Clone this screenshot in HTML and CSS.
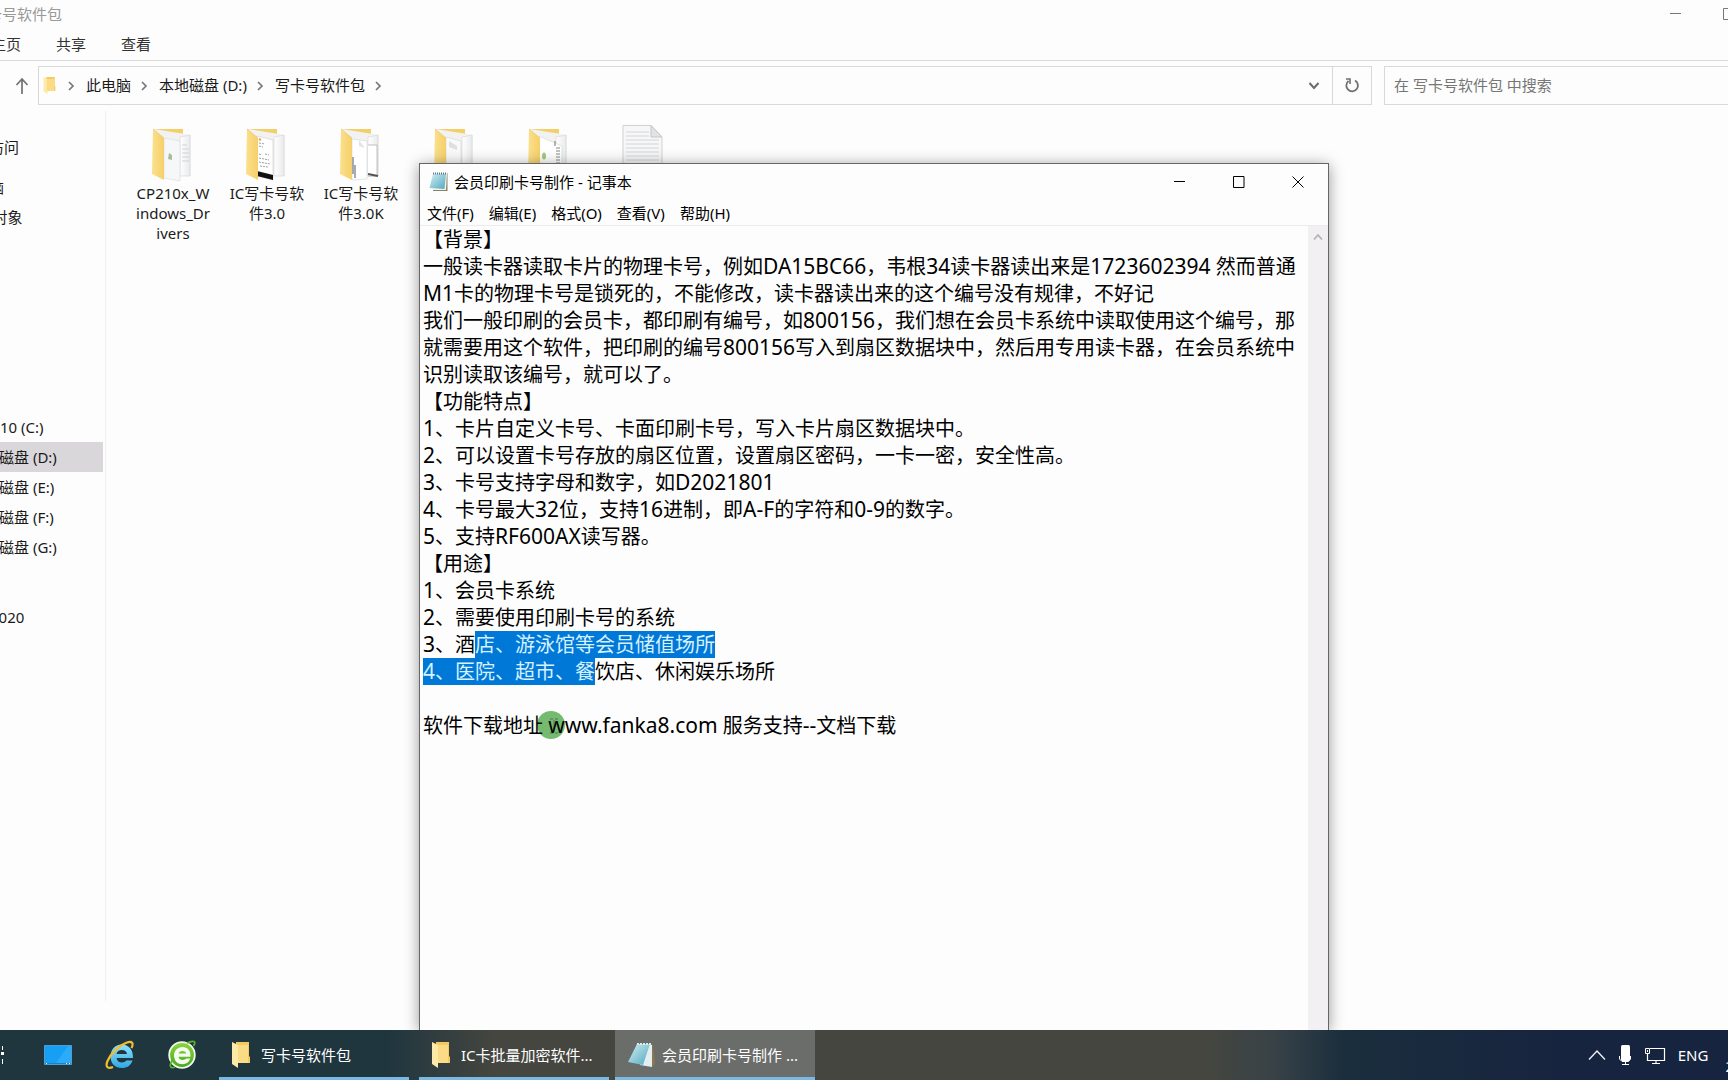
FILE: index.html
```html
<!DOCTYPE html>
<html lang="zh-CN">
<head>
<meta charset="utf-8">
<title>写卡号软件包</title>
<link rel="stylesheet" href="styles.css">
</head>
<body>
<svg class="defs" aria-hidden="true">
  <defs>
    <linearGradient id="gold" x1="0" x2="1"><stop offset="0" stop-color="#fbe08c"/><stop offset="1" stop-color="#f6d06a"/></linearGradient>
    <linearGradient id="paper" x1="0" x2="1"><stop offset="0" stop-color="#ffffff"/><stop offset="1" stop-color="#e9eaec"/></linearGradient>
    <linearGradient id="pad" x1="0" y1="0" x2="1" y2="1"><stop offset="0" stop-color="#d3eef4"/><stop offset="1" stop-color="#4fa9bd"/></linearGradient>
    <linearGradient id="ie" x1="0" y1="0" x2="0" y2="1"><stop offset="0" stop-color="#8fe0fb"/><stop offset="1" stop-color="#2fa9e4"/></linearGradient>
    <linearGradient id="green" x1="0" y1="0" x2="0" y2="1"><stop offset="0" stop-color="#8ed63f"/><stop offset="1" stop-color="#46a81d"/></linearGradient>
    <symbol id="folder" viewBox="0 0 18 26"><path d="M4 0H17V14L18 15V21H4Z" fill="#f3cb62"/><path d="M0 0L6 3V26L0 22Z" fill="#fde9a8"/><path d="M6 3H16V21H6Z" fill="#fbdc84"/></symbol>
    <symbol id="folder-back" viewBox="0 0 42 54"><path d="M1 1H31V20H1Z" fill="#f3cf67"/><path d="M2 1L39 7V48H14Z" fill="#f2f2f3"/><path d="M28 9L38 7V48H28Z" fill="url(#paper)" stroke="#d4d5d7" stroke-width=".6"/></symbol>
    <symbol id="folder-front" viewBox="0 0 42 54"><path d="M1 1L12 10V52L0 46Z" fill="url(#gold)"/><path d="M1 1L12 10" stroke="#e8c45e" stroke-width=".6"/></symbol>
    <symbol id="chevron" viewBox="0 0 8 12"><path d="M1 2L5 6L1 10" fill="none" stroke="#777" stroke-width="1.7"/></symbol>
  </defs>
</svg>

<main class="desktop">
  <section class="explorer" aria-label="写卡号软件包">
    <header class="titlebar">
      <span class="caption">写卡号软件包</span>
      <button class="win-btn" aria-label="最小化"><svg width="12" height="12" viewBox="0 0 12 12"><path d="M0 5.500H11" stroke="#777"/></svg></button>
      <button class="win-btn" aria-label="最大化"><svg width="12" height="12" viewBox="0 0 12 12"><path d="M.5 .5H10.500V11.500H.5Z" fill="none" stroke="#777"/></svg></button>
    </header>
    <nav class="tabs">
      <button>主页</button><button>共享</button><button>查看</button>
    </nav>
    <div class="addressbar">
      <button class="up" aria-label="上移"><svg width="14" height="18" viewBox="0 0 14 18"><path d="M7 17V2M1.500 8L7 2L12.500 8" fill="none" stroke="#727272" stroke-width="1.700"/></svg></button>
      <div class="path">
        <svg class="path-icon" width="13" height="17"><use href="#folder"/></svg>
        <svg width="8" height="12"><use href="#chevron"/></svg>
        <a href="#pc">此电脑</a>
        <svg width="8" height="12"><use href="#chevron"/></svg>
        <a href="#d">本地磁盘 (D:)</a>
        <svg width="8" height="12"><use href="#chevron"/></svg>
        <a href="#here">写卡号软件包</a>
        <svg width="8" height="12"><use href="#chevron"/></svg>
        <button class="drop" aria-label="展开"><svg width="12" height="10" viewBox="0 0 12 10"><path d="M1.500 2L6 7L10.500 2" fill="none" stroke="#6a6a6a" stroke-width="2"/></svg></button>
        <button class="refresh" aria-label="刷新"><svg width="16" height="18" viewBox="0 0 16 18"><path d="M11 3.500A5.800 5.800 0 1 1 4.500 4" fill="none" stroke="#6f6f6f" stroke-width="1.800"/><path d="M2 2H6V7" fill="none" stroke="#6f6f6f" stroke-width="1.600"/></svg></button>
      </div>
      <input class="search" type="search" aria-label="搜索" placeholder="在 写卡号软件包 中搜索">
    </div>
    <div class="body">
      <nav class="tree">
        <a class="root" href="#quick">快速访问</a>
        <a class="root" href="#pc">此电脑</a>
        <a href="#3d">3D 对象</a>
        <div class="drives">
          <a href="#c">Win 10 (C:)</a>
          <a class="current" href="#d">本地磁盘 (D:)</a>
          <a href="#e">本地磁盘 (E:)</a>
          <a href="#f">本地磁盘 (F:)</a>
          <a href="#g">本地磁盘 (G:)</a>
        </div>
        <a class="share" href="#2020">2020</a>
      </nav>
      <div class="files">
        <a class="file" href="#1">
          <svg width="42" height="54" viewBox="0 0 42 54"><use href="#folder-back"/><path d="M12 10L28 13V53L12 50Z" fill="#f6f7f8" stroke="#d9dadc" stroke-width=".6"/><path d="M17 25L20 27V32L16 31Z" fill="#a9bd9a"/><path d="M30 17H35M30 21H37M30 25H37M30 29H37M30 33H37" stroke="#d0d2d4"/><use href="#folder-front"/></svg>
          <span>CP210x_W<wbr>indows_Dr<wbr>ivers</span>
        </a>
        <a class="file" href="#2">
          <svg width="42" height="54" viewBox="0 0 42 54"><use href="#folder-back"/><path d="M11 8L27 12V52L11 48Z" fill="#fff" stroke="#ccc" stroke-width=".6"/><path d="M13 15L19 16M13 18L17 19M13 26L16 27M19 26L23 27M13 30L23 32M13 34L24 36M14 38L22 39" stroke="#9aa0a8" stroke-dasharray="2 1"/><path d="M11 43L27 47V52L11 48Z" fill="#111"/><path d="M13 11L15 12" stroke="#e3a63c" stroke-width="2"/><use href="#folder-front"/></svg>
          <span>IC写卡号软件3.0</span>
        </a>
        <a class="file" href="#3">
          <svg width="42" height="54" viewBox="0 0 42 54"><use href="#folder-back"/><path d="M28 17H37V48H28" fill="#fff" stroke="#aaa" stroke-width=".7"/><path d="M28 46L38 48" stroke="#555" stroke-width="2"/><path d="M12 11L27 13V51L12 52Z" fill="#fff" stroke="#d2d3d5" stroke-width=".6"/><path d="M19 12L25 20L19 18Z" fill="#e3e4e6"/><path d="M13 29V46M15 37V50" stroke="#8b9097" stroke-width="1.500"/><use href="#folder-front"/></svg>
          <span>IC写卡号软件3.0K</span>
        </a>
        <a class="file" href="#4" aria-label="文件夹">
          <svg width="42" height="54" viewBox="0 0 42 54"><use href="#folder-back"/><path d="M12 9L27 13V52L12 50Z" fill="#fafafa" stroke="#d2d3d5" stroke-width=".6"/><path d="M15 13L23 18V22L15 19Z" fill="#dedfe1"/><use href="#folder-front"/></svg>
        </a>
        <a class="file" href="#5" aria-label="文件夹">
          <svg width="42" height="54" viewBox="0 0 42 54"><use href="#folder-back"/><path d="M11 8L34 18V52L12 50Z" fill="#fff" stroke="#d2d3d5" stroke-width=".6"/><ellipse cx="16" cy="28" rx="2" ry="3.500" fill="#a5c97f"/><path d="M27 13V18M28 20H32M28 23H32M28 26H32M28 29H32M28 32H32M28 35H32" stroke="#888" stroke-width="1.200"/><use href="#folder-front"/></svg>
        </a>
        <a class="file doc" href="#6" aria-label="文本文档">
          <svg width="42" height="56" viewBox="0 0 42 56"><path d="M1 .5H29L40 12V55H1Z" fill="#f7f7f8" stroke="#d0d1d3"/><path d="M29 .5V12H40Z" fill="#e2e3e5" stroke="#c4c5c8"/><path d="M4 7H27M4 11H27M4 15H37M4 19H37M4 23H37M4 27H37M4 31H37M4 35H37M4 39H37" stroke="#d2d5d9"/></svg>
        </a>
      </div>
    </div>
  </section>

  <section class="notepad" aria-label="记事本">
    <header class="np-title">
      <svg width="20" height="20" viewBox="0 0 20 20"><path d="M5 1H18.500V19H4Z" fill="#8a8063"/><path d="M5 1H18L17 18H3Z" fill="#f4f4ef"/><path d="M4 2H17L15.500 17L.5 16Z" fill="url(#pad)"/><path d="M4 1.500H18" stroke="#5e7880" stroke-width="2" stroke-dasharray="1 1"/></svg>
      <span class="caption">会员印刷卡号制作 - 记事本</span>
      <button aria-label="最小化"><svg width="12" height="12" viewBox="0 0 12 12"><path d="M0 5.500H11" stroke="#000"/></svg></button>
      <button aria-label="最大化"><svg width="12" height="12" viewBox="0 0 12 12"><path d="M.5 .5H11V11.500H.5Z" fill="none" stroke="#000"/></svg></button>
      <button aria-label="关闭"><svg width="12" height="12" viewBox="0 0 12 12"><path d="M.5 .5L11.500 11.500M11.500 .5L.5 11.500" stroke="#000"/></svg></button>
    </header>
    <nav class="np-menu">
      <button>文件(F)</button><button>编辑(E)</button><button>格式(O)</button><button>查看(V)</button><button>帮助(H)</button>
    </nav>
    <div class="np-body">
      <div class="text" role="textbox" aria-multiline="true" aria-label="文本" contenteditable="true" spellcheck="false">
        <p>【背景】</p>
        <p>一般读卡器读取卡片的物理卡号，例如<i>DA15BC66</i>，韦根<i>34</i>读卡器读出来是<i>1723602394</i> 然而普通<i>M1</i>卡的物理卡号是锁死的，不能修改，读卡器读出来的这个编号没有规律，不好记</p>
        <p>我们一般印刷的会员卡，都印刷有编号，如<i>800156</i>，我们想在会员卡系统中读取使用这个编号，那就需要用这个软件，把印刷的编号<i>800156</i>写入到扇区数据块中，然后用专用读卡器，在会员系统中识别读取该编号，就可以了。</p>
        <p>【功能特点】</p>
        <p><i>1</i>、卡片自定义卡号、卡面印刷卡号，写入卡片扇区数据块中。</p>
        <p><i>2</i>、可以设置卡号存放的扇区位置，设置扇区密码，一卡一密，安全性高。</p>
        <p><i>3</i>、卡号支持字母和数字，如<i>D2021801</i></p>
        <p><i>4</i>、卡号最大<i>32</i>位，支持<i>16</i>进制，即<i>A-F</i>的字符和<i>0-9</i>的数字。</p>
        <p><i>5</i>、支持<i>RF600AX</i>读写器。</p>
        <p>【用途】</p>
        <p><i>1</i>、会员卡系统</p>
        <p><i>2</i>、需要使用印刷卡号的系统</p>
        <p><i>3</i>、酒<mark>店、游泳馆等会员储值场所</mark></p>
        <p><mark><i>4</i>、医院、超市、餐</mark>饮店、休闲娱乐场所</p>
        <p><br></p>
        <p>软件下载地址<span class="pointer"><svg width="28" height="28" viewBox="0 0 28 28"><circle cx="14" cy="14" r="14" fill="#74bb70"/><path d="M13 8H16M18 8H21M17 9V21M13 22H16M18 22H21" stroke="#55705a" fill="none"/></svg></span> <i>www.fanka8.com</i> 服务支持<i>--</i>文档下载</p>
      </div>
      <div class="scroll"><svg width="10" height="8" viewBox="0 0 10 8"><path d="M1 6.500L5 2L9 6.500" fill="none" stroke="#b5b3b6" stroke-width="1.800"/></svg></div>
    </div>
  </section>
</main>

<footer class="taskbar">
  <button class="pin" aria-label="任务视图"><svg width="28" height="20" viewBox="0 0 28 20"><path d="M22.500 1V5M22.500 14V19" stroke="#fff" fill="none"/><path d="M21 7H24V10H21Z" fill="#fff"/></svg></button>
  <button class="pin" aria-label="桌面"><svg width="28" height="20" viewBox="0 0 28 20"><path d="M.5 .5H27.500V19.500H.5Z" fill="#16a0f5" stroke="#4c9fd0"/><path d="M12 18L24 1H27V18Z" fill="#2cabf8"/><path d="M1 18.500H27" stroke="#1f80be"/><path d="M2 18.500H3M22 18.500H23M25 18.500H26" stroke="#fff"/></svg></button>
  <button class="pin" aria-label="Internet Explorer"><svg width="30" height="30" viewBox="0 0 30 30"><path d="M28 18H11.500C12 21 14 22.500 17 22.500C19 22.500 20.500 21.800 21.300 20.500H27.500C26 25.500 22 28 17 28C10 28 5.500 23.500 5.500 16.500C5.500 9.500 10 4.500 16.500 4.500C24 4.500 28.300 10 28 18ZM22 14C21.600 11.300 19.700 10 16.800 10C14 10 12.100 11.300 11.500 14Z" fill="url(#ie)"/><path d="M26.500 8C29 3 27 .8 22 2.500C15 4.800 6 13 2.500 21C.3 26.300 2 29.500 8 27" fill="none" stroke="#f3bd2c" stroke-width="2.200"/></svg></button>
  <button class="pin" aria-label="浏览器"><svg width="30" height="30" viewBox="0 0 30 30"><circle cx="15" cy="15" r="12.800" fill="url(#green)" stroke="#f2faec" stroke-width="1.800"/><path d="M23.500 16.800H11.500C12 19 13.500 20 15.800 20C17.300 20 18.500 19.500 19.300 18.600H23.200C22 22.500 19.300 24.200 15.700 24.200C10.600 24.200 7 21 7 15.700C7 10.600 10.500 7 15.500 7C20.800 7 24 10.800 23.500 16.800ZM19.300 13.500C18.900 11.800 17.600 10.900 15.500 10.900C13.400 10.900 12 11.800 11.500 13.500Z" fill="#f4fbef"/><path d="M20 3C26 0 30 1 26.500 6M7 18C2 24 2 29.500 8 27" fill="none" stroke="#57b52c" stroke-width="1.800"/></svg></button>
  <button class="task"><svg width="18" height="26"><use href="#folder"/></svg><span>写卡号软件包</span></button>
  <button class="task"><svg width="18" height="26"><use href="#folder"/></svg><span>IC卡批量加密软件...</span></button>
  <button class="task active"><svg width="28" height="26" viewBox="0 0 28 26"><path d="M22 2L25 3L27 22L24 25Z" fill="#8b7650"/><path d="M20 2L24 3V25L12 23Z" fill="#e4eef0"/><path d="M9 2H22L15 23L0 20Z" fill="url(#pad)"/><path d="M9 2H24" stroke="#d9ebee" stroke-width="2" stroke-dasharray="2 1"/></svg><span>会员印刷卡号制作 ...</span></button>
  <div class="tray">
    <button aria-label="显示隐藏的图标"><svg width="18" height="12" viewBox="0 0 18 12"><path d="M1 10.500L9 2L17 10.500" fill="none" stroke="#eef2f5" stroke-width="1.400"/></svg></button>
    <button aria-label="麦克风"><svg width="14" height="20" viewBox="0 0 14 20"><rect x="3" y="0" width="9" height="16" rx="1.500" fill="#fff"/><path d="M1.500 11V14L4 16.500H10.500L12.500 14V11M7.500 17V19.500M4 19.500H11" fill="none" stroke="#fff"/></svg></button>
    <button aria-label="网络"><svg width="22" height="18" viewBox="0 0 22 18"><path d="M6 2.500H20.500V14.500H3.500V8M12 15V17.500M8 17.500H16" fill="none" stroke="#fff" stroke-width="1.200"/><path d="M1.500 2.500H5.500V7.500H1.500ZM3.500 4V6" fill="none" stroke="#fff"/></svg></button>
    <button>ENG</button>
    <time class="clock">2</time>
  </div>
</footer>
</body>
</html>
```
FILE: styles.css
```css
* { box-sizing: border-box; }
body {
  margin: 0;
  height: 100vh;
  display: flex;
  flex-direction: column;
  overflow: hidden;
  background: #fdfdfd;
  color: #1a1a1a;
  font: 15px/20px "Noto Sans", "Noto Sans CJK SC", sans-serif;
  text-spacing-trim: space-all;
}
button { font: inherit; color: inherit; background: none; border: 0; padding: 0; display: flex; align-items: center; justify-content: center; white-space: nowrap; }
a { color: inherit; text-decoration: none; }
svg { display: block; flex: none; }
.defs { position: absolute; width: 0; height: 0; }

.desktop { flex: 1; min-height: 0; display: flex; position: relative; overflow: hidden; }

/* Explorer window: hangs over both sides of the screen */
.explorer { flex: 1; min-width: 0; display: flex; flex-direction: column; margin: 0 -56px 0 -48px; }
.titlebar { display: flex; height: 28px; padding: 0 29px 0 20px; align-items: center; color: #999; }
.titlebar .caption { flex: 1; }
.win-btn { width: 53px; height: 28px; }
.tabs { display: flex; gap: 35px; height: 33px; padding: 0 0 0 39px; border-bottom: 1px solid #d9d9d9; color: #333; }
.addressbar { display: flex; height: 50px; padding: 5px 0 6px 62px; align-items: stretch; }
.up { width: 16px; margin-right: 8px; }
.path { flex: 1; display: flex; align-items: center; gap: 10px; border: 1px solid #d9d9d9; padding-left: 4px; }
.path a { padding-bottom: 2px; }
.path-icon { margin-right: 2px; }
.drop { margin-left: auto; width: 20px; }
.refresh { width: 39px; align-self: stretch; border-left: 1px solid #d9d9d9; margin-left: -2px; }
.search { width: 400px; margin-left: 12px; padding: 0 9px 2px; border: 1px solid #d9d9d9; border-radius: 0; background: none; font: inherit; appearance: none; }
.search::placeholder { color: #767676; opacity: 1; }

.body { flex: 1; display: flex; min-height: 0; padding-bottom: 29px; }
.tree { width: 154px; border-right: 1px solid #f0f0f1; padding-top: 21px; display: flex; flex-direction: column; }
.tree a { display: block; height: 30px; line-height: 30px; padding-left: 17px; margin-right: 2px; white-space: nowrap; }
.tree .root { padding-left: 7px; }
.tree .root + .root { margin-top: 10px; }
.drives { padding-top: 180px; }
.tree .current { background: #d9d7d9; }
.tree .share { margin-top: 40px; padding-left: 38px; }
.files { display: grid; grid-template-columns: repeat(6, 94px); align-content: start; padding: 17px 0 0 20px; }
.file { display: flex; flex-direction: column; align-items: center; padding: 0 8px; gap: 1px; text-align: center; }
.doc { margin-top: -3px; }

/* Notepad window */
.notepad { position: absolute; left: 419px; right: 399px; top: 163px; bottom: 0; display: flex; flex-direction: column; background: #fdfdfd; border: 1px solid #666; border-bottom: 0; box-shadow: 0 2px 14px rgba(0, 0, 0, .4); color: #000; }
.np-title { display: flex; align-items: center; height: 36px; padding: 0 1px 0 9px; }
.np-title .caption { flex: 1; padding-left: 5px; }
.np-title button { width: 59px; height: 36px; }
.np-menu { display: flex; gap: 15px; height: 26px; padding: 2px 0 2px 7px; border-bottom: 1px solid #ececec; }
.np-body { flex: 1; display: flex; min-height: 0; }
.text { position: relative; z-index: 0; flex: 1; padding: 0 5px 0 3px; font-size: 20px; line-height: 27px; outline: 0; }
.text p { margin: 0; }
.text i { font-style: normal; font-size: 21px; line-height: 1; }
.text mark { display: inline-block; height: 27px; background: #0078d7; color: #d6f1ff; vertical-align: top; }
.pointer { position: relative; }
.pointer svg { position: absolute; z-index: -1; left: -6px; top: -1px; }
.scroll { width: 20px; background: #f2f0f3; display: flex; justify-content: center; padding-top: 7px; }

/* Taskbar */
.taskbar { display: flex; height: 50px; margin: 0 -6px 0 -36px; flex: none; color: #fff; background: linear-gradient(90deg, #20363f 0, #20363f 24%, #45463f 30%, #45463f 70%, #384247 74%, #1a2e3d 78%, #17243f 90%); }
.pin { width: 62px; padding-right: 12px; }
.pin:first-child { width: 69px; padding-right: 9px; }
.taskbar .task { width: 190px; margin-right: 10px; padding: 2px 12px 0 13px; gap: 11px; justify-content: flex-start; border-bottom: 3px solid #7cb9e2; }
.task:nth-of-type(6) { margin-right: 6px; }
.taskbar .active { width: 200px; background: #6b6d6a; gap: 6px; }
.tray { display: flex; margin-left: auto; gap: 12px; align-items: center; }
.clock { align-self: flex-end; padding: 0 0 4px 5px; }
```
